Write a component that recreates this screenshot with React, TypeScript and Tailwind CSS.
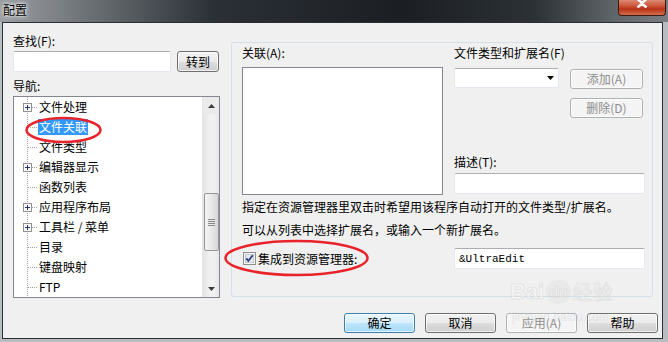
import type { ReactNode } from "react";

const treeItems = [
  { label: "文件处理", plus: true },
  { label: "文件关联", selected: true },
  { label: "文件类型" },
  { label: "编辑器显示", plus: true },
  { label: "函数列表" },
  { label: "应用程序布局", plus: true },
  { label: "工具栏 / 菜单", plus: true },
  { label: "目录" },
  { label: "键盘映射" },
  { label: "FTP" },
];

function Button({
  children,
  width,
  disabled,
  primary,
}: {
  children: ReactNode;
  width: string;
  disabled?: boolean;
  primary?: boolean;
}) {
  let look =
    "border-[#707070] bg-[linear-gradient(180deg,#f2f2f2_0%,#ebebeb_50%,#dddddd_51%,#cfcfcf_100%)] text-black";
  if (disabled) look = "border-[#adb2b5] bg-[#f4f4f4] text-[#8d8d8d]";
  if (primary)
    look =
      "border-[#3c7fb1] bg-[linear-gradient(180deg,#eaf6fd_0%,#d9f0fc_50%,#bee6fd_51%,#a7d9f5_100%)] text-black";
  return (
    <div
      className={`flex h-[20px] shrink-0 items-center justify-center rounded-[3px] border leading-[14px] shadow-[inset_0_0_0_1px_rgba(255,255,255,0.7)] ${look} ${width}`}
    >
      {children}
    </div>
  );
}

function TreeRow({ label, plus, selected }: { label: string; plus?: boolean; selected?: boolean }) {
  return (
    <div className="flex h-[20px] items-center">
      <svg width="24" height="20" className="shrink-0">
        <line x1="13.5" y1="0" x2="13.5" y2="20" stroke="#a0a0a0" strokeDasharray="1 1" />
        <line x1={plus ? 18 : 14} y1="10.5" x2="24" y2="10.5" stroke="#a0a0a0" strokeDasharray="1 1" />
        {plus && (
          <>
            <rect x="9.5" y="6.5" width="8" height="8" fill="#fafafa" stroke="#919191" />
            <path d="M11 10.5h5M13.5 8v5" stroke="#26336e" />
          </>
        )}
      </svg>
      <span
        className={`h-[16px] px-[1px] leading-[16px] whitespace-nowrap ${
          selected ? "bg-[#3399ff] text-white" : "text-black"
        }`}
      >
        {label}
      </span>
    </div>
  );
}

function ScrollBar() {
  return (
    <div className="flex w-[17px] shrink-0 flex-col border-l border-[#e6e6e6] bg-[linear-gradient(90deg,#e3e3e3_0%,#f1f1f1_40%,#f1f1f1_70%,#e6e6e6_100%)]">
      <div className="flex h-[17px] items-center justify-center bg-[#eaeaea]">
        <svg width="7" height="4">
          <path d="M0 4L3.5 0L7 4z" fill="#3c3c3c" />
        </svg>
      </div>
      <div className="flex-1">
        <div className="ml-[1px] mt-[79px] flex h-[58px] w-[15px] flex-col items-center justify-center gap-[1px] rounded-[2px] border border-[#979797] bg-[linear-gradient(90deg,#f3f3f3_0%,#e8e8e8_50%,#d6d6d6_100%)]">
          <div className="h-px w-[7px] bg-[#8a8a8a]" />
          <div className="h-px w-[7px] bg-[#8a8a8a]" />
          <div className="h-px w-[7px] bg-[#8a8a8a]" />
          <div className="h-px w-[7px] bg-[#8a8a8a]" />
        </div>
      </div>
      <div className="flex h-[17px] items-center justify-center">
        <svg width="7" height="4">
          <path d="M0 0L7 0L3.5 4z" fill="#3c3c3c" />
        </svg>
      </div>
    </div>
  );
}

const input =
  "rounded-[2px] border border-[#e3e9ef] border-t-[#abadb3] bg-white";

export default function App() {
  return (
    <div className="relative flex h-[342px] w-[668px] flex-col overflow-hidden bg-[#b9bcc0] font-['Noto_Sans_CJK_SC','Noto_Sans',sans-serif] text-[12px] text-black">
      {/* title bar */}
      <div className="flex h-[22px] shrink-0 items-start bg-[linear-gradient(90deg,#9c9fa3_0%,#70757a_12%,#2b3036_32%,#1b1f24_60%,#2c3136_80%,#60656a_92%,#7a7e82_100%)]">
        <span className="ml-[3px] mt-[3px] leading-[14px] text-black [text-shadow:0_0_5px_#fff,0_0_3px_#fff]">
          配置
        </span>
        <div className="ml-auto mr-[2px] flex h-[16px] w-[48px] justify-center rounded-b-[4px] border border-t-0 border-[#3b1a12] bg-[linear-gradient(180deg,#dc8a74_0%,#cd5537_40%,#b8321a_60%,#d46f48_100%)]">
          <svg width="12" height="9" className="mt-[-1px]">
            <path d="M1.5 0L6 4L10.5 0M1.5 8.5L6 4.5L10.5 8.5" stroke="#fff" strokeWidth="2.4" fill="none" />
          </svg>
        </div>
      </div>

      {/* client */}
      <div className="mb-[3px] ml-[2px] mr-[5px] flex flex-1 flex-col border border-[#2b2f34] bg-[#f0f0f0] pl-[10px] pt-[11px]">
        <div className="flex items-start">
          {/* left column */}
          <div className="flex w-[207px] shrink-0 flex-col">
            <div className="h-[14px] leading-[14px]">查找(F):</div>
            <div className="mt-[3px] flex">
              <div className={`h-[21px] w-[158px] ${input}`} />
              <div className="ml-[6px]">
                <Button width="w-[42px] !h-[21px]">转到</Button>
              </div>
            </div>
            <div className="mt-[7px] h-[14px] leading-[14px]">导航:</div>
            <div className="mt-[3px] flex h-[202px] border border-[#828790] bg-white">
              <div className="flex-1 overflow-hidden">
                {treeItems.map((it) => (
                  <TreeRow key={it.label} label={it.label} plus={it.plus} selected={it.selected} />
                ))}
              </div>
              <ScrollBar />
            </div>
          </div>

          {/* right group */}
          <div className="ml-[11px] mt-[8px] flex h-[255px] w-[422px] shrink-0 flex-col rounded-[3px] border border-[#d5dfe5] pl-[10px] pt-[3px]">
            <div className="flex items-start">
              <div className="flex w-[201px] shrink-0 flex-col">
                <div className="h-[14px] leading-[14px]">关联(A):</div>
                <div className="mt-[7px] h-[128px] border border-[#828790] bg-white" />
              </div>
              <div className="ml-[11px] flex w-[191px] shrink-0 flex-col">
                <div className="h-[14px] leading-[14px] whitespace-nowrap">文件类型和扩展名(F)</div>
                <div className="mt-[8px] flex items-start">
                  <div className={`flex h-[20px] w-[105px] items-center justify-end pr-[4px] ${input}`}>
                    <svg width="7" height="4">
                      <path d="M0 0L7 0L3.5 4z" fill="#000" />
                    </svg>
                  </div>
                  <div className="ml-[11px] mt-[1px]">
                    <Button width="w-[73px]" disabled>
                      添加(A)
                    </Button>
                  </div>
                </div>
                <div className="ml-[116px] mt-[9px]">
                  <Button width="w-[73px]" disabled>
                    删除(D)
                  </Button>
                </div>
                <div className="mt-[37px] h-[14px] leading-[14px]">描述(T):</div>
                <div className={`mt-[4px] h-[21px] w-[191px] ${input}`} />
              </div>
            </div>
            <div className="mt-[5px] h-[14px] leading-[14px] whitespace-nowrap">
              指定在资源管理器里双击时希望用该程序自动打开的文件类型/扩展名。
            </div>
            <div className="mt-[9px] h-[14px] leading-[14px] whitespace-nowrap">
              可以从列表中选择扩展名，或输入一个新扩展名。
            </div>
            <div className="mt-[11px] flex h-[21px] items-center">
              <div className="flex w-[212px] shrink-0 items-center">
                <svg width="13" height="13" className="ml-[1px] shrink-0">
                  <rect x="0.5" y="0.5" width="12" height="12" fill="#f4f4f4" stroke="#8e8f8f" />
                  <rect x="2.5" y="2.5" width="8" height="8" fill="#e4e8ee" stroke="#c5cbd2" />
                  <path d="M3.2 6.4L5.3 8.8L9.8 3.2" stroke="#2a3f7a" strokeWidth="1.8" fill="none" />
                </svg>
                <span className="ml-[2px] leading-[14px] whitespace-nowrap">集成到资源管理器:</span>
              </div>
              <div className={`flex h-[21px] w-[191px] items-center pl-[4px] ${input}`}>
                <span className="font-['Liberation_Mono',monospace] text-[11px] leading-[14px]">&amp;UltraEdit</span>
              </div>
            </div>
          </div>
        </div>

        <div className="mt-[15px] flex justify-end gap-[10px] pr-[4px]">
          <Button width="w-[71px]" primary>
            确定
          </Button>
          <Button width="w-[71px]">取消</Button>
          <Button width="w-[71px]" disabled>
            应用(A)
          </Button>
          <Button width="w-[71px]">帮助</Button>
        </div>
      </div>

      {/* watermark */}
      <div className="pointer-events-none absolute left-[510px] top-[280px] flex items-center gap-[2px] font-['Liberation_Sans',sans-serif] text-[22px] font-bold leading-[24px] text-white/40 [-webkit-text-stroke:1px_rgba(180,180,180,0.25)]">
        <span>Bai</span>
        <span className="rounded-full bg-[rgba(210,210,210,0.25)] px-[3px] text-[15px]">du</span>
        <span className="font-['Noto_Sans_CJK_SC',sans-serif] text-[20px] font-normal">经验</span>
      </div>
      <div className="pointer-events-none absolute left-[512px] top-[311px] font-['Liberation_Sans',sans-serif] text-[12px] leading-[13px] text-[rgba(200,200,200,0.35)]">
        jingyan.baidu.com
      </div>

      {/* red annotations */}
      <svg className="pointer-events-none absolute left-[24px] top-[115px]" width="80" height="30">
        <ellipse cx="39.5" cy="15" rx="37" ry="12" fill="none" stroke="#e8232b" strokeWidth="2.5" />
      </svg>
      <svg className="pointer-events-none absolute left-[223px] top-[238px]" width="148" height="40">
        <ellipse cx="73.5" cy="20" rx="71" ry="17" fill="none" stroke="#e8232b" strokeWidth="2.5" />
      </svg>
    </div>
  );
}
